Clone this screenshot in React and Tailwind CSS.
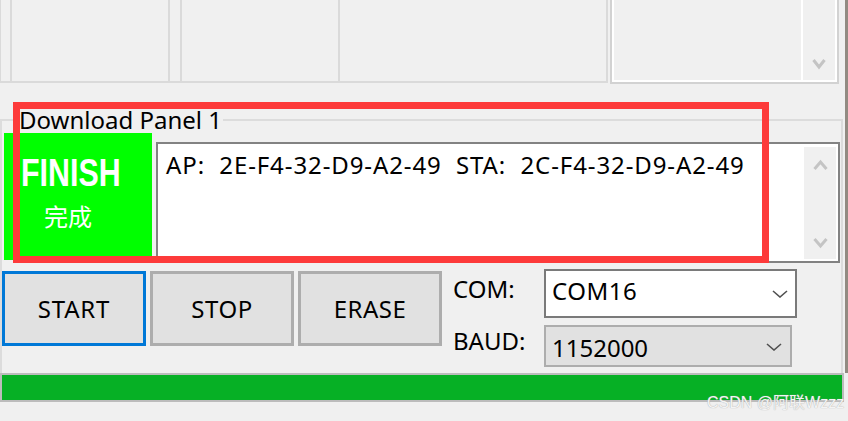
const Chev = ({ up = false, className = "", color = "#c4c4c4", w = 15, h = 12, sw = 3 }) => (
  <svg width={w} height={h} viewBox={`0 0 ${w} ${h}`} className={className}>
    {up ? (
      <polyline points={`1.5,${h - 2} ${w / 2},3 ${w - 1.5},${h - 2}`} fill="none" stroke={color} strokeWidth={sw} />
    ) : (
      <polyline points={`1.5,2 ${w / 2},${h - 3} ${w - 1.5},2`} fill="none" stroke={color} strokeWidth={sw} />
    )}
  </svg>
);

const Drop = ({ className = "" }) => (
  <svg width="16" height="8" viewBox="0 0 16 8" className={className}>
    <polyline points="1,1 8,7 15,1" fill="none" stroke="#505050" strokeWidth="1.6" />
  </svg>
);

export default function App() {
  return (
    <div className="relative flex h-[421px] w-[848px] overflow-hidden bg-[#f0f0f0] font-['Noto_Sans','Noto_Sans_CJK_SC',sans-serif] text-[24px] leading-[24px] text-black">
      <div className="flex w-[845px] flex-col">
        {/* top area */}
        <div className="flex h-[84px] items-start">
          <div className="flex h-[83px] w-[608px] border-b-2 border-[#dadada]">
            <div className="w-[10px] border-l border-[#dadada]" />
            <div className="w-[160px] border-x-2 border-[#dadada]" />
            <div className="w-[10px]" />
            <div className="w-[160px] border-x-2 border-[#dadada]" />
            <div className="w-[268px] border-r-2 border-[#dadada]" />
          </div>
          <div className="ml-[2px] flex h-[84px] w-[229px] border-x-2 border-b-2 border-[#d2d2d2]">
            <div className="flex flex-1 border-x-2 border-b-2 border-white">
              <div className="flex-1" />
              <div className="flex w-[34px] items-start border-l-2 border-white pl-[9px] pt-[58px]">
                <Chev w={14} h={12} />
              </div>
            </div>
          </div>
        </div>

        {/* group box */}
        <div className="mt-[35px] flex h-[254px] w-[843px] flex-col border-x-2 border-t-2 border-[#dcdcdc]">
          <div className="-mt-[13px] ml-[16px] self-start bg-[#f0f0f0] px-[1px]">Download Panel 1</div>

          <div className="mt-[1px] flex items-start">
            <div className="ml-[2px] flex h-[127px] w-[148px] flex-col bg-[#00ff00] text-white">
              <div className="ml-[17px] mt-[21px] origin-left scale-x-[0.8] font-['Liberation_Sans',sans-serif] text-[38px] font-bold leading-[38px]">
                FINISH
              </div>
              <div className="ml-[40px] mt-[12px] font-['Noto_Sans_CJK_SC',sans-serif] text-[24px] leading-[24px]">完成</div>
            </div>
            <div className="ml-[4px] mt-[9px] flex h-[121px] w-[684px] border-2 border-[#828282] bg-white">
              <div className="flex-1 whitespace-pre pl-[8px] pt-[9px] tracking-[0.9px]">
                {"AP:  2E-F4-32-D9-A2-49  STA:  2C-F4-32-D9-A2-49"}
              </div>
              <div className="mb-[2px] mr-[2px] mt-[3px] flex w-[32px] flex-col items-center justify-between bg-[#f0f0f0] pb-[10px] pt-[12px]">
                <Chev up />
                <Chev />
              </div>
            </div>
          </div>

          <div className="mt-[6px] flex items-start">
            <button className="mt-[2px] flex h-[75px] w-[144px] items-center justify-center border-[3px] border-[#0078d7] bg-[#e1e1e1] tracking-[0.8px]">
              START
            </button>
            <button className="ml-[4px] mt-[2px] flex h-[75px] w-[144px] items-center justify-center border-[3px] border-[#adadad] bg-[#e1e1e1] tracking-[0.6px]">
              STOP
            </button>
            <button className="ml-[4px] mt-[2px] flex h-[75px] w-[144px] items-center justify-center border-[3px] border-[#adadad] bg-[#e1e1e1] tracking-[0.5px]">
              ERASE
            </button>
            <div className="ml-[11px] flex flex-col">
              <div className="flex items-start">
                <div className="mt-[8px] w-[91px]">COM:</div>
                <div className="flex h-[49px] w-[253px] items-start border-2 border-[#7a7a7a] bg-white">
                  <div className="flex-1 pl-[6px] pt-[8px] tracking-[0.5px]">COM16</div>
                  <Drop className="mr-[7px] mt-[19px]" />
                </div>
              </div>
              <div className="mt-[7px] flex items-start">
                <div className="mt-[4px] w-[91px]">BAUD:</div>
                <div className="flex h-[42px] w-[248px] items-start border-2 border-[#adadad] bg-[#e1e1e1]">
                  <div className="flex-1 pl-[6px] pt-[9px]">1152000</div>
                  <Drop className="mr-[8px] mt-[16px]" />
                </div>
              </div>
            </div>
          </div>
        </div>

        {/* progress */}
        <div className="h-[29px] w-[844px] border-2 border-[#bcbcbc] bg-[#06b025]" />
      </div>
      <div className="h-[373px] w-[3px] bg-[#928b82]" />

      {/* annotation */}
      <div className="pointer-events-none absolute left-[13px] top-[102px] h-[161px] w-[756px] border-[7px] border-[#fd3a3a]" />
      {/* watermark */}
      <div className="pointer-events-none absolute left-[707px] top-[395px] font-['Liberation_Sans','Noto_Sans_CJK_SC',sans-serif] text-[16px] leading-[16px] text-[#f4f4f4] [text-shadow:0_0_1px_#9a9a9a]">
        CSDN @阿联Wzzz
      </div>
    </div>
  );
}
